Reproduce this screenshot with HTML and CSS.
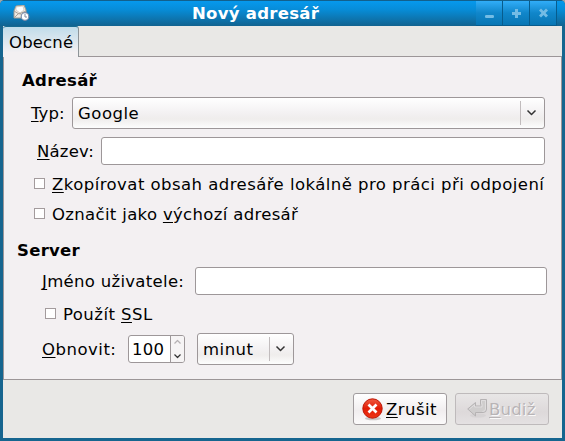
FILE: index.html
```html
<!DOCTYPE html>
<html lang="cs">
<head>
<meta charset="utf-8">
<title>Nový adresář</title>
<link rel="stylesheet" href="styles.css">
</head>
<body>
<div class="window">
  <header class="titlebar">
    <svg class="app-icon" width="17" height="17" viewBox="0 0 17 17">
      <path d="M1 6 3 1 11 0l2 5v8H1z" fill="#eee9e2" stroke="#9e9990"/>
      <path d="M3 5V2l7-1 1 4-4 3z" fill="#fff" stroke="#c8c1b8" stroke-width=".7"/>
      <path d="m1 6 5 3 7-3M1 13l5-5 3 2" fill="none" stroke="#aaa298"/>
      <circle cx="12" cy="11.5" r="3.8" fill="#fff" stroke="#7e8ca9" stroke-width="1.2"/>
      <path d="M12 9v3h2" fill="none" stroke="#8088a0"/>
    </svg>
    <h1 class="title">Nový adresář</h1>
    <div class="controls">
      <span class="control"><svg width="26" height="24"><rect x="9" y="14" width="9" height="3" rx="1.2"/></svg></span>
      <span class="control"><svg width="26" height="24"><path d="M12 8h3v3h3v3h-3v3h-3v-3H9v-3h3z"/></svg></span>
      <span class="control"><svg width="26" height="24"><path d="m11 7.500 2.500 2.500 2.500-2.500 2 2-2.500 2.500 2.500 2.500-2 2-2.500-2.500-2.500 2.500-2-2 2.500-2.500L9 9.500z"/></svg></span>
    </div>
  </header>
  <main class="client">
    <nav class="tabs"><div class="tab"><span class="t-tab">Obecné</span></div></nav>
    <section class="panel">
      <h2 class="heading heading-book">Adresář</h2>
      <div class="row row-type">
        <label class="t-type"><u>T</u>yp:</label>
        <div class="combo combo-wide"><span class="value t-google">Google</span><span class="drop"><svg width="11" height="8"><path d="m1.500 1.500 4 4 4-4"/></svg></span></div>
      </div>
      <div class="row row-name">
        <label class="t-name"><u>N</u>ázev:</label>
        <input class="field" type="text">
      </div>
      <label class="check check-copy"><span class="box"></span><span class="caption t-copy"><u>Z</u>kopírovat obsah adresáře lokálně pro práci při odpojení</span></label>
      <label class="check"><span class="box"></span><span class="caption t-default">Označit jako <u>v</u>ýchozí adresář</span></label>
      <h2 class="heading heading-server">Server</h2>
      <div class="row row-user">
        <label class="t-user"><u>J</u>méno uživatele:</label>
        <input class="field" type="text">
      </div>
      <label class="check check-ssl"><span class="box"></span><span class="caption t-ssl">Použít <u>S</u>SL</span></label>
      <div class="row row-refresh">
        <label class="t-refresh"><u>O</u>bnovit:</label>
        <div class="spin"><span class="number">100</span><span class="arrows"><svg width="13" height="26"><path class="off" d="m3.500 7.500 3-3 3 3"/><path d="m3.500 18.500 3 3 3-3"/></svg></span></div>
        <div class="combo combo-small"><span class="value t-min">minut</span><span class="drop"><svg width="11" height="8"><path d="m1.500 1.500 4 4 4-4"/></svg></span></div>
      </div>
    </section>
    <footer class="actions">
      <button class="button">
        <svg width="22" height="23" viewBox="0 0 22 23">
          <defs><linearGradient id="red" x2="0" y2="1"><stop stop-color="#f05a40"/><stop offset=".5" stop-color="#e11c05"/><stop offset="1" stop-color="#ee3516"/></linearGradient></defs>
          <ellipse cx="11" cy="20.500" rx="8" ry="1.800" fill="#aaa" opacity=".6"/>
          <circle cx="10.500" cy="10.500" r="9.700" fill="url(#red)" stroke="#bd1605"/>
          <path d="m6.500 6.500 8 8m0-8-8 8" stroke="#fff" stroke-width="2.700"/>
        </svg>
        <span class="t-cancel"><u>Z</u>rušit</span>
      </button>
      <button class="button disabled" disabled>
        <svg width="21" height="22" viewBox="0 0 21 22">
          <ellipse cx="11" cy="17.500" rx="8" ry="2" fill="#d0cdce" opacity=".6"/>
          <path d="M.700 11 8.500 4.500V8H14V6.500h-.500v-5H19.500V11q0 3.500-3.500 3.500H8.500V18z" fill="#cfcdcd" stroke="#b5b2b3"/>
          <path d="M2.500 11 7.500 6.800V9H15V5.500h-.500v-3h4V11q0 2.500-3 2.500" fill="none" stroke="#e3e1e2" stroke-width=".8"/>
        </svg>
        <span class="t-ok"><u>B</u>udiž</span>
      </button>
    </footer>
  </main>
</div>
</body>
</html>
```

FILE: styles.css
```css
* { box-sizing: border-box; }
body {
  margin: 0;
  background: #9fa5a8;
  font: 16.5px/20px "DejaVu Sans", sans-serif;
  color: #000;
}
h1, h2 { margin: 0; font-size: 16.5px; line-height: 20px; letter-spacing: .28px; }
label, span { white-space: nowrap; }
u { text-decoration-thickness: 1px; text-underline-offset: 2px; text-decoration-skip-ink: none; }
.t-tab { letter-spacing: .15px; }
.t-type { letter-spacing: .1px; }
.t-name { letter-spacing: .2px; }
.t-copy { letter-spacing: .45px; }
.t-default { letter-spacing: .33px; }
.t-user { letter-spacing: .3px; }
.t-google, .t-refresh, .t-min { letter-spacing: .5px; }
.t-ssl, .t-cancel { letter-spacing: .45px; }
.t-ok { letter-spacing: .2px; }
.window {
  width: 565px;
  height: 441px;
  padding: 0 3px 3px;
  background: #16658f;
  border-radius: 5px 5px 0 0;
  overflow: hidden;
}
.titlebar {
  display: flex;
  height: 26px;
  margin: 0 -3px;
  padding-left: 13px;
  border-top: 1px solid #12608c;
  background: linear-gradient(#0699ed, #078cd7 35%, #126390);
}
.app-icon { flex: none; margin-top: 4px; }
.title { width: 446px; padding: 3px 0 0 162px; flex: none; white-space: nowrap; color: #fff; }
.controls { display: flex; }
.control {
  width: 27px;
  height: 25px;
  border-right: 1px solid #075c8d;
  border-bottom: 1px solid #075c8d;
  background: linear-gradient(#31adf8, #1086ca 50%, #0876b4);
}
.control svg { display: block; fill: #73bce5; }
.client { height: 412px; background: #e9e8e6; }
.tabs { display: flex; height: 30px; }
.tab {
  width: 76px;
  height: 31px;
  padding: 6px 0 0 6px;
  border: 1px solid #8d9498;
  border-top-color: #176a91;
  border-bottom: 0;
  border-left: 0;
  border-radius: 3px 3px 0 0;
  background: linear-gradient(#c0dcea, #f3f0f2 85%);
  position: relative;
}
.panel {
  height: 324px;
  border: 1px solid #9c9698;
  background: #f3f0f2;
}
.heading-book { padding: 14px 0 0 18px; height: 40px; }
.heading-server { padding: 12px 0 0 13px; height: 38px; }
.row { display: flex; align-items: center; }
.row label { padding-top: 1px; flex: none; }
.row-type { height: 32px; padding-left: 27px; }
.row-type label { width: 41px; }
.combo {
  display: flex;
  align-items: center;
  height: 32px;
  border: 1px solid #9d9799;
  border-radius: 3px;
  background: linear-gradient(#fff, #f3f1f2 50%, #efedec 70%, #fdfdfd);
}
.combo .value { flex: 1; padding: 1px 0 0 5px; }
.drop { display: flex; align-items: center; height: 24px; width: 24px; padding-left: 5px; border-left: 1px solid #c1bcbd; }
svg path { stroke-linejoin: round; }
.drop path, .arrows path { fill: none; stroke: #333; stroke-width: 1.5; }
.combo-wide { width: 473px; }
.combo-small { width: 97px; margin-left: 12px; }
.row-name { height: 28px; margin-top: 8px; padding-left: 33px; }
.row-name label { width: 64px; }
.field {
  width: 444px;
  height: 28px;
  border: 1px solid #9d9799;
  border-radius: 3px;
  background: #fff;
  padding: 0 5px;
  font: inherit;
}
.check { display: flex; align-items: center; height: 30px; padding-left: 30px; }
.check-copy { margin-top: 4px; }
.caption { padding-top: 2px; }
.box { width: 11px; height: 11px; margin: -1px 7px 0 0; border: 1px solid #a39b9d; background: #fff; }
.row-user { height: 28px; padding-left: 38px; }
.row-user label { width: 153px; }
.row-user .field { width: 352px; }
.check-ssl { height: 30px; margin-top: 4px; padding-left: 41px; }
.row-refresh { height: 32px; margin-top: 4px; padding-left: 38px; }
.row-refresh label { width: 86px; }
.spin {
  display: flex;
  width: 57px;
  height: 28px;
  border: 1px solid #9d9799;
  border-radius: 3px;
  overflow: hidden;
  background: #fff;
}
.number { width: 42px; padding: 4px 0 0 3px; border-right: 1px solid #9d9799; letter-spacing: .3px; }
.arrows { background: #f6f4f5; }
.arrows svg { display: block; }
.arrows path { stroke-width: 1.2; }
.arrows .off { stroke: #b5b1b3; }
.actions { display: flex; gap: 8px; padding: 13px 0 0 350px; }
.button {
  display: flex;
  align-items: center;
  width: 94px;
  height: 32px;
  padding: 0 0 0 8px;
  border: 1px solid #a19c9e;
  border-radius: 3px;
  background: linear-gradient(#fff, #f1eeef 55%, #fbfafa);
  color: #000;
  font: inherit;
}
.button svg { flex: none; margin-right: 2px; }
.button span { padding-top: 1px; }
.button.disabled { padding-left: 11px; background: linear-gradient(#e8e6e6, #ddd9da 60%, #e4e1e2); border-color: #bebabb; color: #b8b4b6; text-shadow: 1px 1px #faf9f9; }
.button.disabled svg { margin-right: 1px; }
```
